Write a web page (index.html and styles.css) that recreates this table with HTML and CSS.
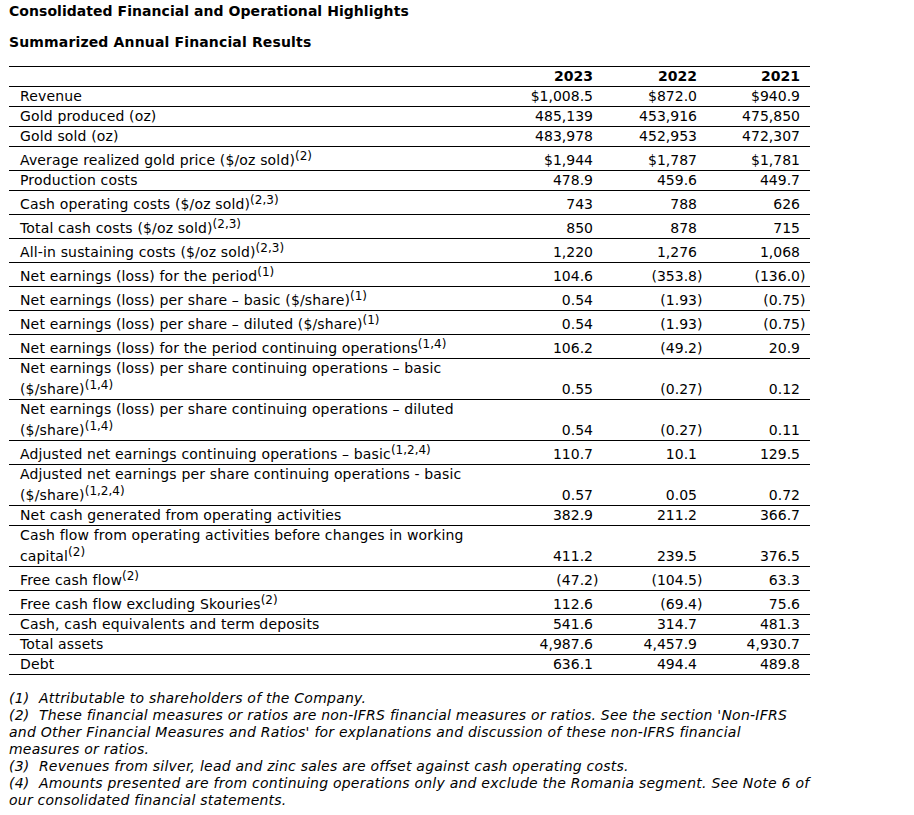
FILE: index.html
```html
<!DOCTYPE html>
<html lang="en">
<head>
<meta charset="utf-8">
<title>Consolidated Financial and Operational Highlights</title>
<link rel="stylesheet" href="styles.css">
</head>
<body>
<div class="page">
  <h1 class="title">Consolidated Financial and Operational Highlights</h1>
  <h2 class="subtitle">Summarized Annual Financial Results</h2>
  <table class="fin">
    <colgroup>
      <col class="c-label">
      <col class="c-num">
      <col class="c-num">
      <col class="c-last">
    </colgroup>
    <thead>
      <tr>
        <th class="label"></th>
        <th class="num">2023</th>
        <th class="num">2022</th>
        <th class="num">2021</th>
      </tr>
    </thead>
    <tbody>
      <tr><td class="label">Revenue</td><td class="num">$1,008.5</td><td class="num">$872.0</td><td class="num">$940.9</td></tr>
      <tr><td class="label">Gold produced (oz)</td><td class="num">485,139</td><td class="num">453,916</td><td class="num">475,850</td></tr>
      <tr><td class="label">Gold sold (oz)</td><td class="num">483,978</td><td class="num">452,953</td><td class="num">472,307</td></tr>
      <tr><td class="label">Average realized gold price ($/oz sold)<sup>(2)</sup></td><td class="num">$1,944</td><td class="num">$1,787</td><td class="num">$1,781</td></tr>
      <tr><td class="label">Production costs</td><td class="num">478.9</td><td class="num">459.6</td><td class="num">449.7</td></tr>
      <tr><td class="label">Cash operating costs ($/oz sold)<sup>(2,3)</sup></td><td class="num">743</td><td class="num">788</td><td class="num">626</td></tr>
      <tr><td class="label">Total cash costs ($/oz sold)<sup>(2,3)</sup></td><td class="num">850</td><td class="num">878</td><td class="num">715</td></tr>
      <tr><td class="label">All-in sustaining costs ($/oz sold)<sup>(2,3)</sup></td><td class="num">1,220</td><td class="num">1,276</td><td class="num">1,068</td></tr>
      <tr><td class="label">Net earnings (loss) for the period<sup>(1)</sup></td><td class="num">104.6</td><td class="num">(353.8<span class="hang">)</span></td><td class="num">(136.0<span class="hang">)</span></td></tr>
      <tr><td class="label">Net earnings (loss) per share – basic ($/share)<sup>(1)</sup></td><td class="num">0.54</td><td class="num">(1.93<span class="hang">)</span></td><td class="num">(0.75<span class="hang">)</span></td></tr>
      <tr><td class="label">Net earnings (loss) per share – diluted ($/share)<sup>(1)</sup></td><td class="num">0.54</td><td class="num">(1.93<span class="hang">)</span></td><td class="num">(0.75<span class="hang">)</span></td></tr>
      <tr><td class="label">Net earnings (loss) for the period continuing operations<sup>(1,4)</sup></td><td class="num">106.2</td><td class="num">(49.2<span class="hang">)</span></td><td class="num">20.9</td></tr>
      <tr><td class="label">Net earnings (loss) per share continuing operations – basic<br>($/share)<sup>(1,4)</sup></td><td class="num">0.55</td><td class="num">(0.27<span class="hang">)</span></td><td class="num">0.12</td></tr>
      <tr><td class="label">Net earnings (loss) per share continuing operations – diluted<br>($/share)<sup>(1,4)</sup></td><td class="num">0.54</td><td class="num">(0.27<span class="hang">)</span></td><td class="num">0.11</td></tr>
      <tr><td class="label">Adjusted net earnings continuing operations – basic<sup>(1,2,4)</sup></td><td class="num">110.7</td><td class="num">10.1</td><td class="num">129.5</td></tr>
      <tr><td class="label">Adjusted net earnings per share continuing operations - basic<br>($/share)<sup>(1,2,4)</sup></td><td class="num">0.57</td><td class="num">0.05</td><td class="num">0.72</td></tr>
      <tr><td class="label">Net cash generated from operating activities</td><td class="num">382.9</td><td class="num">211.2</td><td class="num">366.7</td></tr>
      <tr><td class="label">Cash flow from operating activities before changes in working<br>capital<sup>(2)</sup></td><td class="num">411.2</td><td class="num">239.5</td><td class="num">376.5</td></tr>
      <tr><td class="label">Free cash flow<sup>(2)</sup></td><td class="num">(47.2<span class="hang">)</span></td><td class="num">(104.5<span class="hang">)</span></td><td class="num">63.3</td></tr>
      <tr><td class="label">Free cash flow excluding Skouries<sup>(2)</sup></td><td class="num">112.6</td><td class="num">(69.4<span class="hang">)</span></td><td class="num">75.6</td></tr>
      <tr><td class="label">Cash, cash equivalents and term deposits</td><td class="num">541.6</td><td class="num">314.7</td><td class="num">481.3</td></tr>
      <tr><td class="label">Total assets</td><td class="num">4,987.6</td><td class="num">4,457.9</td><td class="num">4,930.7</td></tr>
      <tr><td class="label">Debt</td><td class="num">636.1</td><td class="num">494.4</td><td class="num">489.8</td></tr>
    </tbody>
  </table>
  <div class="notes">
    <p>(1)&nbsp; Attributable to shareholders of the Company.</p>
    <p>(2)&nbsp; These financial measures or ratios are non-IFRS financial measures or ratios. See the section 'Non-IFRS<br>and Other Financial Measures and Ratios' for explanations and discussion of these non-IFRS financial<br>measures or ratios.</p>
    <p>(3)&nbsp; Revenues from silver, lead and zinc sales are offset against cash operating costs.</p>
    <p>(4)&nbsp; Amounts presented are from continuing operations only and exclude the Romania segment. See Note 6 of<br>our consolidated financial statements.</p>
  </div>
</div>
</body>
</html>
```

FILE: styles.css
```css
html, body {
  margin: 0;
  padding: 0;
  background: #ffffff;
}

body {
  font-family: "DejaVu Sans", Verdana, sans-serif;
  font-size: 14px;
  line-height: 17px;
  color: #000000;
}

.page {
  padding: 3px 0 0 9px;
}

.title,
.subtitle {
  margin: 0;
  font-size: 14px;
  font-weight: bold;
  line-height: 17px;
}

.title {
  letter-spacing: 0.05px;
}

.subtitle {
  margin-top: 14px;
  letter-spacing: 0.15px;
}

.fin {
  border-collapse: collapse;
  table-layout: fixed;
  width: 801px;
  margin-top: 15px;
}

.c-label { width: 490px; }
.c-num { width: 104px; }
.c-last { width: 103px; }

.fin th,
.fin td {
  padding: 1px 10px 1px 0;
  border-bottom: 1px solid #000000;
  vertical-align: bottom;
  font-weight: normal;
}

.fin thead th {
  border-top: 1px solid #000000;
  font-weight: bold;
}

.fin .label {
  text-align: left;
  padding-left: 11px;
  padding-right: 0;
  letter-spacing: 0.15px;
}

.fin .num {
  text-align: right;
  white-space: nowrap;
}

.hang {
  display: inline-block;
  width: 0;
  text-align: left;
}

sup {
  font-size: 12px;
  line-height: 16px;
  vertical-align: 5px;
  letter-spacing: 0;
}

.notes {
  margin-top: 15px;
  width: 830px;
  font-style: italic;
  letter-spacing: 0.23px;
}

.notes p {
  margin: 0;
  line-height: 17px;
}
```
